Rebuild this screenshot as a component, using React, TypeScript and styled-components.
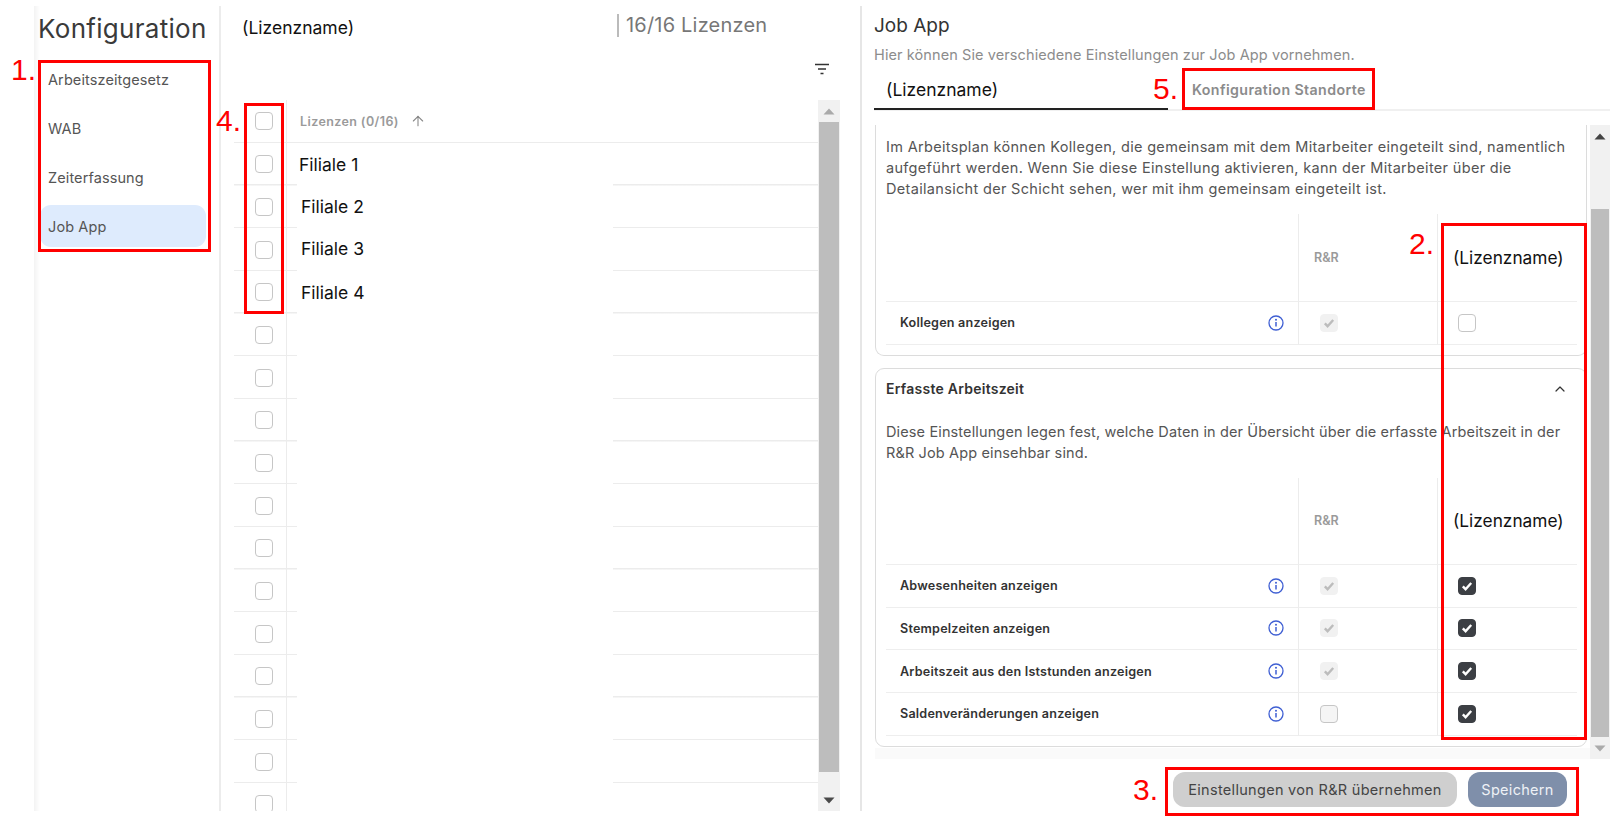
import React from "react";
import styled, { createGlobalStyle } from "styled-components";
import { ArrowUp, ChevronUp } from "lucide-react";

const UI = '"Inter", "Open Sans", "Liberation Sans", sans-serif';

const Global = createGlobalStyle`
  html, body { margin: 0; padding: 0; background: #fff; }
  #root { width: 1618px; height: 824px; overflow: hidden; }
  * { box-sizing: border-box; }
`;

const Page = styled.div`
  position: relative;
  width: 1618px;
  height: 824px;
  padding: 6px 0 13px 34px;
  display: flex;
  font-family: ${UI};
  color: #444;
  background: #fff;
`;

const Sidebar = styled.aside`
  width: 187px;
  flex: none;
  padding: 8px 13px 0 6px;
  border-right: 2px solid #ececec;
  background: linear-gradient(to right, #f3f3f3 0, #fff 6px);
`;

const SideTitle = styled.h1`
  margin: 0 0 14px -2px;
  font-size: 26px;
  letter-spacing: 0.3px;
  line-height: 30px;
  font-weight: 400;
  color: #3a3a3a;
  white-space: nowrap;
`;

const MenuList = styled.nav`
  display: flex;
  flex-direction: column;
  gap: 7px;
`;

const MenuItem = styled.div<{ $active?: boolean }>`
  height: 42px;
  display: flex;
  align-items: center;
  padding-left: 8px;
  border-radius: 11px;
  font-size: 14.5px;
  letter-spacing: 0.1px;
  color: #555;
  background: ${(p) => (p.$active ? "#deebfd" : "transparent")};
`;

const Middle = styled.section`
  width: 641px;
  flex: none;
  padding: 0 20px 0 13px;
  border-right: 2px solid #e6e6e6;
  display: flex;
  flex-direction: column;
  height: 805px;
`;

const MiddleHead = styled.div`
  height: 94px;
  flex: none;
  position: relative;
  display: flex;
  flex-direction: column;
`;

const HeadRow = styled.div`
  display: flex;
  align-items: flex-start;
  padding: 8px 0 0 8px;
  height: 57px;
`;

const LicenseName = styled.div`
  font-family: "Inter", "Liberation Sans", sans-serif;
  font-size: 17.5px;
  line-height: 28px;
  color: #111;
  width: 375px;
  flex: none;
  white-space: nowrap;
`;

const Count = styled.div`
  height: 23px;
  padding-left: 7px;
  border-left: 2px solid #bbb;
  font-size: 20px;
  letter-spacing: 0.2px;
  line-height: 23px;
  color: #777;
  white-space: nowrap;
`;

const FilterRow = styled.div`
  display: flex;
  justify-content: flex-end;
  padding-right: 10px;
`;

const TableWrap = styled.div`
  flex: 1;
  display: flex;
  min-height: 0;
  height: 707px;
  overflow: hidden;
`;

const LicenseTable = styled.div`
  flex: 1;
  overflow: hidden;
  position: relative;
  background: linear-gradient(#ececec, #ececec) 52px 0 / 1px 100% no-repeat;
`;

const LicenseHeader = styled.div`
  height: 43px;
  display: flex;
  align-items: center;
  border-bottom: 1.5px solid #ececec;
`;

const LicenseRow = styled.div`
  height: 42.68px;
  display: flex;
  align-items: center;
  background:
    linear-gradient(to right, #ececec 63px, transparent 63px, transparent 379px, #ececec 379px)
    0 100% / 100% 1.5px no-repeat;
`;

const CheckCell = styled.div`
  width: 52px;
  flex: none;
  display: flex;
  justify-content: center;
  padding-left: 7px;
`;

const HeaderLabel = styled.div`
  margin-left: 14px;
  font-size: 12.5px;
  letter-spacing: 0.4px;
  font-weight: 600;
  color: #9a9a9a;
  display: flex;
  align-items: center;
  gap: 11px;
  white-space: nowrap;
`;

const BranchName = styled.div<{ $shift: number; $dy: number }>`
  margin: ${(p) => p.$dy}px 0 0 ${(p) => p.$shift}px;
  font-family: "Inter", "Liberation Sans", sans-serif;
  font-size: 17.5px;
  color: #111;
  white-space: nowrap;
`;

const Box = styled.span<{ $state?: "empty" | "on" | "locked" | "lockedEmpty" }>`
  width: 18px;
  height: 18px;
  flex: none;
  display: inline-flex;
  align-items: center;
  justify-content: center;
  border-radius: 4px;
  border: 1.8px solid
    ${(p) =>
      p.$state === "on" ? "#3c3f44" : p.$state === "locked" ? "#f1f1f1" : "#c6c6c6"};
  background: ${(p) =>
    p.$state === "on"
      ? "#3c3f44"
      : p.$state === "locked"
        ? "#f1f1f1"
        : p.$state === "lockedEmpty"
          ? "#f5f5f5"
          : "#fff"};
`;

const ScrollTrack = styled.div<{ $w: number }>`
  width: ${(p) => p.$w}px;
  flex: none;
  background: #f1f1f1;
  display: flex;
  flex-direction: column;
  height: 100%;
`;

const ScrollArrow = styled.div`
  flex: none;
  height: 22px;
  display: flex;
  align-items: center;
  justify-content: center;
`;

const ScrollThumb = styled.div<{ $grow: number }>`
  flex: ${(p) => p.$grow};
  margin: 0 1px;
  background: #bdbdbd;
`;

const ScrollRest = styled.div<{ $grow: number }>`
  flex: ${(p) => p.$grow};
`;

const Right = styled.section`
  flex: 1;
  padding: 0 8px 0 12px;
  display: flex;
  flex-direction: column;
  height: 805px;
`;

const RightTitle = styled.h2`
  margin: 8px 0 0;
  font-size: 19px;
  line-height: 24px;
  font-weight: 400;
  color: #333;
`;

const RightSub = styled.p`
  margin: 8px 0 0;
  font-size: 14.5px;
  letter-spacing: 0.1px;
  line-height: 18px;
  color: #8c8c8c;
  white-space: nowrap;
`;

const Tabs = styled.div`
  margin-top: 5px;
  height: 42px;
  flex: none;
  display: flex;
  border-bottom: 2px solid #f0f0f0;
`;

const TabActive = styled.div`
  width: 294px;
  height: 41px;
  padding: 2px 0 0 12px;
  display: flex;
  align-items: center;
  border-bottom: 2px solid #222;
  font-family: "Inter", "Liberation Sans", sans-serif;
  font-size: 17.5px;
  color: #111;
`;

const TabIdle = styled.div`
  margin-left: 24px;
  height: 40px;
  display: flex;
  align-items: center;
  font-size: 14.2px;
  letter-spacing: 0.4px;
  font-weight: 600;
  color: #8b8b8b;
  white-space: nowrap;
`;

const ScrollPane = styled.div`
  margin-top: 14px;
  margin-left: 1px;
  width: 735px;
  height: 634px;
  flex: none;
  display: flex;
  overflow: hidden;
`;

const PaneBody = styled.div`
  width: 715px;
  flex: none;
  display: flex;
  flex-direction: column;
  gap: 12px;
  background: linear-gradient(#fafafa, #fafafa) 0 100% / 100% 11px no-repeat;
`;

const Card = styled.div<{ $clipped?: boolean }>`
  width: 712px;
  flex: none;
  background: #fff;
  border: 1.5px solid #dcdcdc;
  border-top-width: ${(p) => (p.$clipped ? 0 : 1.5)}px;
  border-radius: ${(p) => (p.$clipped ? "0 0 9px 9px" : "9px")};
  padding: ${(p) => (p.$clipped ? "11px" : "10px")} 9px 10px 10px;
`;

const CardHead = styled.div`
  height: 20px;
  display: flex;
  align-items: center;
  justify-content: space-between;
  padding-right: 9px;
  font-size: 14px;
  letter-spacing: 0.25px;
  font-weight: 600;
  color: #333;
`;

const CardText = styled.p<{ $top: number; $spacing: number }>`
  margin: ${(p) => p.$top}px 0 0;
  font-size: 14.5px;
  letter-spacing: ${(p) => p.$spacing}px;
  line-height: 21px;
  color: #555;
  white-space: nowrap;
`;

const SettingsGrid = styled.div<{ $top: number }>`
  margin-top: ${(p) => p.$top}px;
  display: grid;
  grid-template-columns: 412px 139px 140px;
`;

const GridCell = styled.div<{ $head?: number; $line?: boolean }>`
  height: ${(p) => (p.$head ? `${p.$head}px` : "42.75px")};
  display: flex;
  align-items: center;
  border-bottom: 1.5px solid #eee;
  border-left: ${(p) => (p.$line ? "1.5px solid #ececec" : "0")};
`;

const LabelCell = styled(GridCell)`
  justify-content: space-between;
  padding: 0 14px;
  font-size: 12.6px;
  letter-spacing: 0.2px;
  font-weight: 600;
  color: #333;
`;

const ValueCell = styled(GridCell)<{ $pad: number }>`
  padding-left: ${(p) => p.$pad}px;
`;

const RrHead = styled.span`
  font-size: 12.5px;
  font-weight: 600;
  color: #9a9a9a;
`;

const ColName = styled.span`
  font-family: "Inter", "Liberation Sans", sans-serif;
  font-size: 17.3px;
  color: #111;
  white-space: nowrap;
`;

const Footer = styled.div`
  margin-top: 13px;
  padding-left: 299px;
  display: flex;
  gap: 11px;
`;

const FooterButton = styled.button<{ $primary?: boolean }>`
  height: 35px;
  border: 0;
  border-radius: 12px;
  font-family: inherit;
  font-size: 14.5px;
  letter-spacing: 0.3px;
  padding: 0;
  white-space: nowrap;
  width: ${(p) => (p.$primary ? 99 : 284)}px;
  background: ${(p) => (p.$primary ? "#7f8faa" : "#cfcfcf")};
  color: ${(p) => (p.$primary ? "#eef1f6" : "#444")};
`;

const RedBox = styled.div<{ $x: number; $y: number; $w: number; $h: number }>`
  position: absolute;
  left: ${(p) => p.$x}px;
  top: ${(p) => p.$y}px;
  width: ${(p) => p.$w}px;
  height: ${(p) => p.$h}px;
  border: 3px solid #f00;
  pointer-events: none;
`;

const RedNumber = styled.div<{ $x: number; $y: number }>`
  position: absolute;
  left: ${(p) => p.$x}px;
  top: ${(p) => p.$y}px;
  font-family: "Liberation Sans", sans-serif;
  font-size: 30px;
  line-height: 34px;
  color: #f00;
`;

const Check = ({ color }: { color: string }) => (
  <svg width="12" height="12" viewBox="0 0 12 12" aria-hidden="true">
    <path d="M1.8 6.4 L4.6 9.2 L10.2 3" fill="none" stroke={color} strokeWidth="2.4" />
  </svg>
);

const CheckBox = ({ state = "empty" }: { state?: "empty" | "on" | "locked" | "lockedEmpty" }) => (
  <Box $state={state}>
    {state === "on" && <Check color="#fff" />}
    {state === "locked" && <Check color="#bcbcbc" />}
  </Box>
);

const FilterIcon = () => (
  <svg width="16" height="12" viewBox="0 0 16 12" aria-hidden="true">
    <path d="M1 1.5H15M4 6H12M6.5 10.5H9.5" stroke="#333" strokeWidth="1.7" fill="none" />
  </svg>
);

const InfoIcon = () => (
  <svg width="16" height="16" viewBox="0 0 16 16" aria-hidden="true">
    <circle cx="8" cy="8" r="7" fill="none" stroke="#3f5fd3" strokeWidth="1.3" />
    <path d="M8 7v4.4" stroke="#3f5fd3" strokeWidth="1.5" />
    <circle cx="8" cy="4.8" r="1" fill="#3f5fd3" />
  </svg>
);

const Triangle = ({ up, color }: { up?: boolean; color: string }) => (
  <svg width="12" height="7" viewBox="0 0 12 7" aria-hidden="true">
    <path d={up ? "M6 0.5 L11.5 6.5 H0.5 Z" : "M0.5 0.5 H11.5 L6 6.5 Z"} fill={color} />
  </svg>
);

const branches: { name: string; shift: number; dy: number }[] = [
  { name: "Filiale 1", shift: 13, dy: 1 },
  { name: "Filiale 2", shift: 15, dy: -1 },
  { name: "Filiale 3", shift: 15, dy: -3 },
  { name: "Filiale 4", shift: 15, dy: 1 },
];

const recorded: { label: string; rr: "locked" | "lockedEmpty" }[] = [
  { label: "Abwesenheiten anzeigen", rr: "locked" },
  { label: "Stempelzeiten anzeigen", rr: "locked" },
  { label: "Arbeitszeit aus den Iststunden anzeigen", rr: "locked" },
  { label: "Saldenveränderungen anzeigen", rr: "lockedEmpty" },
];

const Header = ({ height }: { height: number }) => (
  <>
    <GridCell $head={height} />
    <ValueCell $head={height} $line $pad={15}>
      <RrHead>R&amp;R</RrHead>
    </ValueCell>
    <ValueCell $head={height} $line $pad={15}>
      <ColName>(Lizenzname)</ColName>
    </ValueCell>
  </>
);

const Row = ({
  label,
  rr,
  own,
}: {
  label: string;
  rr: "locked" | "lockedEmpty";
  own: "empty" | "on";
}) => (
  <>
    <LabelCell>
      {label}
      <InfoIcon />
    </LabelCell>
    <ValueCell $line $pad={21}>
      <CheckBox state={rr} />
    </ValueCell>
    <ValueCell $line $pad={20}>
      <CheckBox state={own} />
    </ValueCell>
  </>
);

export default function App() {
  return (
    <Page>
      <Global />
      <Sidebar>
        <SideTitle>Konfiguration</SideTitle>
        <MenuList>
          <MenuItem>Arbeitszeitgesetz</MenuItem>
          <MenuItem>WAB</MenuItem>
          <MenuItem>Zeiterfassung</MenuItem>
          <MenuItem $active>Job App</MenuItem>
        </MenuList>
      </Sidebar>

      <Middle>
        <MiddleHead>
          <HeadRow>
            <LicenseName>(Lizenzname)</LicenseName>
            <Count>16/16 Lizenzen</Count>
          </HeadRow>
          <FilterRow>
            <FilterIcon />
          </FilterRow>
        </MiddleHead>
        <TableWrap>
          <LicenseTable>
            <LicenseHeader>
              <CheckCell>
                <CheckBox />
              </CheckCell>
              <HeaderLabel>
                Lizenzen (0/16)
                <ArrowUp size={16} color="#888" strokeWidth={1.6} />
              </HeaderLabel>
            </LicenseHeader>
            {Array.from({ length: 16 }, (_, i) => (
              <LicenseRow key={i}>
                <CheckCell>
                  <CheckBox />
                </CheckCell>
                {branches[i] && (
                  <BranchName $shift={branches[i].shift} $dy={branches[i].dy}>
                    {branches[i].name}
                  </BranchName>
                )}
              </LicenseRow>
            ))}
          </LicenseTable>
          <ScrollTrack $w={22}>
            <ScrollArrow>
              <Triangle up color="#aaa" />
            </ScrollArrow>
            <ScrollThumb $grow={646} />
            <ScrollRest $grow={17} />
            <ScrollArrow>
              <Triangle color="#4a4a4a" />
            </ScrollArrow>
          </ScrollTrack>
        </TableWrap>
      </Middle>

      <Right>
        <RightTitle>Job App</RightTitle>
        <RightSub>Hier können Sie verschiedene Einstellungen zur Job App vornehmen.</RightSub>
        <Tabs>
          <TabActive>(Lizenzname)</TabActive>
          <TabIdle>Konfiguration Standorte</TabIdle>
        </Tabs>
        <ScrollPane>
          <PaneBody>
            <Card $clipped>
              <CardText $top={0} $spacing={0.32}>
                Im Arbeitsplan können Kollegen, die gemeinsam mit dem Mitarbeiter eingeteilt sind, namentlich
                <br />
                aufgeführt werden. Wenn Sie diese Einstellung aktivieren, kann der Mitarbeiter über die
                <br />
                Detailansicht der Schicht sehen, wer mit ihm gemeinsam eingeteilt ist.
              </CardText>
              <SettingsGrid $top={15}>
                <Header height={88} />
                <Row label="Kollegen anzeigen" rr="locked" own="empty" />
              </SettingsGrid>
            </Card>
            <Card>
              <CardHead>
                Erfasste Arbeitszeit
                <ChevronUp size={16} color="#333" strokeWidth={1.8} />
              </CardHead>
              <CardText $top={22} $spacing={0.13}>
                Diese Einstellungen legen fest, welche Daten in der Übersicht über die erfasste Arbeitszeit in der
                <br />
                R&amp;R Job App einsehbar sind.
              </CardText>
              <SettingsGrid $top={15}>
                <Header height={87} />
                {recorded.map((r) => (
                  <Row key={r.label} label={r.label} rr={r.rr} own="on" />
                ))}
              </SettingsGrid>
            </Card>
          </PaneBody>
          <ScrollTrack $w={20}>
            <ScrollArrow>
              <Triangle up color="#444" />
            </ScrollArrow>
            <ScrollRest $grow={62} />
            <ScrollThumb $grow={528} />
            <ScrollArrow>
              <Triangle color="#aaa" />
            </ScrollArrow>
          </ScrollTrack>
        </ScrollPane>
        <Footer>
          <FooterButton>Einstellungen von R&amp;R übernehmen</FooterButton>
          <FooterButton $primary>Speichern</FooterButton>
        </Footer>
      </Right>

      <RedBox $x={38} $y={60} $w={173} $h={192} />
      <RedBox $x={244} $y={103} $w={40} $h={211} />
      <RedBox $x={1441} $y={223} $w={146} $h={517} />
      <RedBox $x={1165} $y={767} $w={414} $h={49} />
      <RedBox $x={1182} $y={68} $w={193} $h={42} />
      <RedNumber $x={11} $y={53}>1.</RedNumber>
      <RedNumber $x={1409} $y={227}>2.</RedNumber>
      <RedNumber $x={1133} $y={773}>3.</RedNumber>
      <RedNumber $x={216} $y={104}>4.</RedNumber>
      <RedNumber $x={1153} $y={72}>5.</RedNumber>
    </Page>
  );
}
